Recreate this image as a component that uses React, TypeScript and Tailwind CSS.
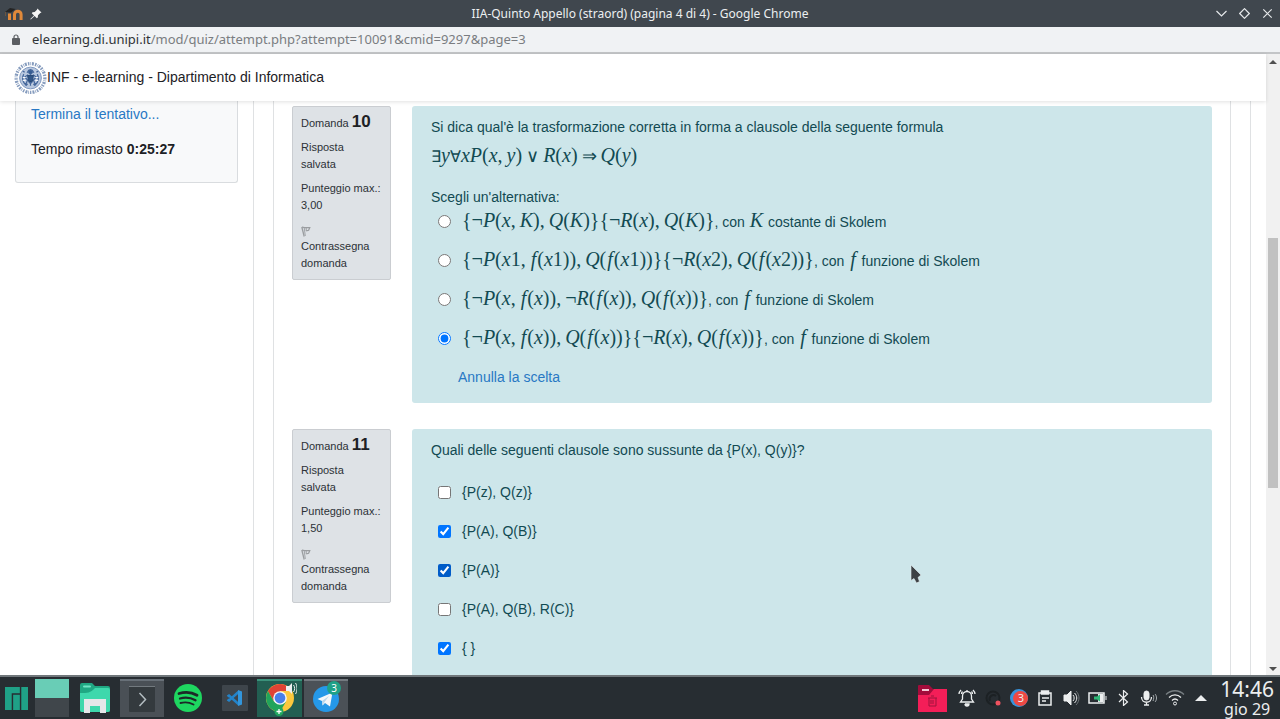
import React, { Fragment, useState } from "react";

const SANS = "font-['Liberation_Sans',Arial,sans-serif]";
const UI = "font-['Noto_Sans',sans-serif]";

/* Typesets a formula: letters in italics, brackets and digits upright, a thin space after commas. */
function Formula({ children }: { children: string }) {
  return (
    <span className="font-['Liberation_Serif',serif] text-[20px] leading-[22px] whitespace-nowrap">
      {Array.from(children).map((c, i) => {
        if (c === "f") return <i key={i} className="mx-px">f</i>;
        if (/[a-zA-Z]/.test(c)) return <i key={i}>{c}</i>;
        if (c === ",") return <span key={i} className="mr-1">,</span>;
        if (c === "∨" || c === "⇒") return <span key={i} className="mx-1 text-[18px]">{c}</span>;
        if (c === "∃" || c === "∀") return <span key={i} className="text-[16px]">{c}</span>;
        return <Fragment key={i}>{c}</Fragment>;
      })}
    </span>
  );
}

function TitleBar() {
  return (
    <header className={`${UI} grid h-[27px] shrink-0 grid-cols-[1fr_auto_1fr] items-center bg-[#40474e] text-[12px] text-[#eceff1]`}>
      <div className="flex items-center gap-[6px] pl-1">
        <svg width="20" height="16" viewBox="0 0 20 16" aria-hidden="true">
          <path d="M1 6 6 2 11.500 3 7 6.500Z" fill="#242424" />
          <path d="M1.500 6V10" stroke="#6b5540" strokeWidth="1" />
          <path d="M5.500 14V7.500M10.500 14V8.500a3.300 3.300 0 0 1 6.600 0V14" fill="none" stroke="#e0893a" strokeWidth="3" />
        </svg>
        <svg width="12" height="12" viewBox="0 0 12 12" aria-hidden="true">
          <path d="M7.400.5 11.500 4.600 10.300 5 8 7.300 7.800 9.500 6.800 10.200 4.600 8 .8 11.500.3 11 4 7.400 1.800 5.200 2.500 4.200 4.700 4 7 1.700Z" fill="#f5f5f5" />
        </svg>
      </div>
      <h1>IIA-Quinto Appello (straord) (pagina 4 di 4) - Google Chrome</h1>
      <div className="flex items-center justify-end gap-3 pr-[7px]">
        <button aria-label="Riduci">
          <svg width="11" height="11" viewBox="0 0 11 11" fill="none" stroke="#e6e9eb" strokeWidth="1.200"><path d="m.5 3 5 5 5-5" /></svg>
        </button>
        <button aria-label="Massimizza">
          <svg width="11" height="11" viewBox="0 0 11 11" fill="none" stroke="#e6e9eb" strokeWidth="1.200"><path d="M5.500.700 10.300 5.500 5.500 10.300.700 5.500Z" /></svg>
        </button>
        <button aria-label="Chiudi">
          <svg width="11" height="11" viewBox="0 0 11 11" fill="none" stroke="#e6e9eb" strokeWidth="1.200"><path d="m1.300 1.300 8.400 8.400m0-8.400-8.400 8.400" /></svg>
        </button>
      </div>
    </header>
  );
}

function AddressBar() {
  return (
    <div className={`${UI} flex h-[27px] shrink-0 items-center gap-3 border-b-2 border-[#c3c5c7] bg-[#f0f2f4] pl-3 text-[13px] text-[#7a7d81]`}>
      <svg width="8" height="11" viewBox="0 0 8 11" aria-hidden="true">
        <rect y="4" width="8" height="7" rx="1" fill="#5b5e62" />
        <path d="M2 4.500V3a2 2 0 0 1 4 0v1.500" fill="none" stroke="#5b5e62" strokeWidth="1.200" />
      </svg>
      <p><span className="text-[#2f3236]">elearning.di.unipi.it</span>/mod/quiz/attempt.php?attempt=10091&amp;cmid=9297&amp;page=3</p>
    </div>
  );
}

function Crest() {
  return (
    <svg width="33" height="36" viewBox="0 0 34 36" aria-hidden="true" fill="none" stroke="#45679b">
      <circle cx="17" cy="18" r="14.800" strokeWidth="3.400" strokeDasharray="1.500 1.100 .7 .9 2 1.200" opacity=".65" />
      <circle cx="17" cy="18" r="11.200" fill="#b9c8df" stroke="#7f98bf" strokeWidth="1" />
      <path d="M17 9v17M13.500 12.500c2-4 5-4 7 0M10 14c-2 4-1 8 2 11l2-5-3-3 3-2 3 3 3-3 3 2-3 3 2 5c3-3 4-7 2-11M12 26l5-4 5 4M11 12l-2-1m14 1 2-1" strokeWidth="1.300" />
      <path d="M14 15.500h6l-1 6h-4Z" fill="#315687" stroke="#274876" />
      <circle cx="17" cy="12" r="2" fill="#345b91" />
      <path d="M9 17.500h3m10 0h3M9 20.500h3m10 0h3M14 24h2m2 0h2" stroke="#fff" strokeWidth="1" />
    </svg>
  );
}

function FlagIcon() {
  return (
    <svg className="block" width="10" height="11" viewBox="0 0 10 11" fill="none" stroke="#9a9da0" aria-hidden="true">
      <path d="M.8 1 3.200 10.500" strokeWidth="1.300" />
      <path d="M3.200 1.500 4.300 10" strokeWidth=".9" />
      <path d="M1 1.200 3.500 1.600 8.800 1.500 7.600 4.300 5.200 4.800" strokeWidth="1.200" />
      <path d="M5.200 2v3" strokeWidth="1" />
    </svg>
  );
}

function Question({ number, marks, children }: { number: number; marks: string; children: React.ReactNode }) {
  return (
    <article className="flex items-start gap-[21px]">
      <aside className="flex w-[99px] shrink-0 flex-col gap-[7px] rounded-[2px] border border-[#cacdd1] bg-[#dee2e6] px-2 pt-[6px] pb-[7px] text-[11px] leading-[17px] text-[#2c3136]">
        <h3>Domanda <b className="text-[17px] text-[#1d2125]">{number}</b></h3>
        <p>Risposta<br />salvata</p>
        <p className="whitespace-nowrap">Punteggio max.:<br />{marks}</p>
        <button className="pt-[5px] text-left">
          <FlagIcon />
          <span className="block pt-px">Contrassegna domanda</span>
        </button>
      </aside>
      <section className="min-w-0 flex-1 rounded-[3px] bg-[#cde6ea] px-[19px] pt-[10px] pb-[15px] text-[14px] leading-[22px] text-[#124a52]">
        {children}
      </section>
    </article>
  );
}

const ALTERNATIVES = [
  { f: "{¬P(x,K),Q(K)}{¬R(x),Q(K)}", symbol: "K", rest: "costante di Skolem" },
  { f: "{¬P(x1,f(x1)),Q(f(x1))}{¬R(x2),Q(f(x2))}", symbol: "f", rest: "funzione di Skolem" },
  { f: "{¬P(x,f(x)),¬R(f(x)),Q(f(x))}", symbol: "f", rest: "funzione di Skolem" },
  { f: "{¬P(x,f(x)),Q(f(x))}{¬R(x),Q(f(x))}", symbol: "f", rest: "funzione di Skolem" },
];

const CLAUSES = ["{P(z), Q(z)}", "{P(A), Q(B)}", "{P(A)}", "{P(A), Q(B), R(C)}", "{ }"];

function QuizPage() {
  const [choice, setChoice] = useState(3);
  const [checked, setChecked] = useState([false, true, true, false, true]);
  return (
    <main className="flex min-h-0 flex-1 overflow-hidden">
      <div className="flex w-[254px] shrink-0 border-r border-[#dfe1e3] pr-[15px] pl-[15px]">
        <aside className="h-[82px] flex-1 rounded-b-[3px] border border-t-0 border-[#d9dcdf] bg-[#f8f9fa] px-[15px] text-[14px] leading-[22px] text-[#1d2125]">
          <a href="#fine" className="mt-[2px] block text-[#2878c4]">Termina il tentativo...</a>
          <p className="mt-[13px]">Tempo rimasto <b>0:25:27</b></p>
        </aside>
      </div>
      <div className="ml-[19px] flex min-w-0 flex-1 flex-col gap-[26px] border-x border-[#dfe1e3] px-[18px] pt-[5px]">
        <Question number={10} marks="3,00">
          <p>Si dica qual'è la trasformazione corretta in forma a clausole della seguente formula</p>
          <p className="mt-[6px]"><Formula>∃y∀xP(x,y)∨R(x)⇒Q(y)</Formula></p>
          <fieldset className="mt-[18px]">
            <legend>Scegli un'alternativa:</legend>
            <div className="mt-[2px] flex flex-col gap-[17px] pl-[7px]">
              {ALTERNATIVES.map((a, i) => (
                <label key={i} className="flex h-[22px] items-center gap-[11px]">
                  <input type="radio" name="q10" className="size-[13px]" checked={choice === i} onChange={() => setChoice(i)} />
                  <span className="whitespace-nowrap">
                    <Formula>{a.f}</Formula>, con <span className="mx-px"><Formula>{a.symbol}</Formula></span> {a.rest}
                  </span>
                </label>
              ))}
            </div>
          </fieldset>
          <button className="mt-[17px] ml-[27px] block text-[#2878c4]" onClick={() => setChoice(-1)}>Annulla la scelta</button>
        </Question>
        <Question number={11} marks="1,50">
          <p>Quali delle seguenti clausole sono sussunte da {"{P(x), Q(y)}"}?</p>
          <div className="mt-[20px] flex flex-col gap-[17px] pb-10 pl-[7px]">
            {CLAUSES.map((c, i) => (
              <label key={c} className="flex h-[22px] items-center gap-[11px]">
                <input
                  type="checkbox"
                  className={i === 2 ? "size-[13px] accent-[#005cc8]" : "size-[13px]"}
                  checked={checked[i]}
                  onChange={() => setChecked(checked.map((v, j) => (j === i ? !v : v)))}
                />
                {c}
              </label>
            ))}
          </div>
        </Question>
      </div>
      <div className="ml-[19px] w-4 shrink-0 border-l border-[#dfe1e3]" />
    </main>
  );
}

function Scrollbar() {
  return (
    <div className="flex w-[14px] shrink-0 flex-col bg-[#f1f1f1]">
      <svg width="14" height="17" viewBox="0 0 14 17" aria-hidden="true"><path d="M3 10h8L7 6Z" fill="#505050" /></svg>
      <div className="flex-[167]" />
      <div className="mr-[2px] ml-[2px] flex-[250] bg-[#c1c1c1]" />
      <div className="flex-[170]" />
      <svg width="14" height="17" viewBox="0 0 14 17" aria-hidden="true"><path d="M3 9h8l-4 4Z" fill="#505050" /></svg>
    </div>
  );
}

function Launchers() {
  return (
    <nav className="flex h-full items-center">
      <button aria-label="Menu" className="flex w-[35px] pl-[5px]">
        <svg width="23" height="23" viewBox="0 0 24 24"><path d="M0 0h15.500v6.500H7V24H0ZM8.500 8h7v16h-7ZM17 0h7v24h-7Z" fill="#1fa187" /></svg>
      </button>
      <button aria-label="Desktop virtuali" className="flex h-[38px] w-[34px] flex-col">
        <span className="w-full flex-1 bg-[#69cdb6]" />
        <span className="w-full flex-1 bg-[#40464b]" />
      </button>
      <button aria-label="File" className="flex w-[51px] justify-center">
        <svg width="32" height="32" viewBox="0 0 32 32">
          <path d="M1 3a2 2 0 0 1 2-2h10l3 3h13a2 2 0 0 1 2 2v22a2 2 0 0 1-2 2H3a2 2 0 0 1-2-2Z" fill="#20a883" />
          <path d="M1 11c8 0 10 0 15-5h13a2 2 0 0 1 2 2v20a2 2 0 0 1-2 2H3a2 2 0 0 1-2-2Z" fill="#3ed8ac" />
          <rect x="4" y="3.500" width="8" height="2" rx="1" fill="#71e5c5" />
          <path d="M5 17h22v14h-6v-7H11v7H5Z" fill="#e5e7e9" />
        </svg>
      </button>
      <button aria-label="Terminale" className="flex h-[38px] w-[44px] items-center justify-center border-t-2 border-[#687078] bg-[#4a5056]">
        <svg width="26" height="26" viewBox="0 0 26 26"><rect width="26" height="26" rx="1" fill="#343a3e" /><path d="M0 .5h26" stroke="#737a7f" /><path d="m10.500 7 6 6.500-6 6.500" fill="none" stroke="#b4bdc1" strokeWidth="1.500" /></svg>
      </button>
      <button aria-label="Spotify" className="flex w-[48px] justify-center">
        <svg width="28" height="28" viewBox="0 0 28 28">
          <circle cx="14" cy="14" r="14" fill="#1ed760" />
          <path d="M5 9.500c6-1.800 13-1.200 18 1.700" fill="none" stroke="#1d2a28" strokeWidth="2.800" strokeLinecap="round" />
          <path d="M6 14.500c5-1.500 11-.8 15.500 1.700" fill="none" stroke="#1d2a28" strokeWidth="2.300" strokeLinecap="round" />
          <path d="M6.500 19c4.500-1.200 9-.7 13 1.500" fill="none" stroke="#1d2a28" strokeWidth="1.900" strokeLinecap="round" />
        </svg>
      </button>
      <button aria-label="Visual Studio Code" className="flex w-[45px] justify-center">
        <svg width="26" height="26" viewBox="0 0 26 26">
          <rect width="26" height="26" rx="1" fill="#3e454b" />
          <path d="M17 6.500 7 15.500l-1.500-1M17 19.500 7 10.500l-1.500 1" fill="none" stroke="#2383c9" strokeWidth="2.500" />
          <path d="m16 5 4 1.500v13L16 21Z" fill="#3296dc" />
        </svg>
      </button>
      <button aria-label="Google Chrome" className="flex h-[38px] w-[45px] items-center justify-center border-t-2 border-[#3b927b] bg-[#225f52]">
        <svg width="34" height="34" viewBox="0 0 34 34">
          <circle cx="17" cy="16" r="14" fill="#fbc83d" />
          <path d="M17 16 4.900 9A14 14 0 0 1 29.100 9H17Z" fill="#df4334" />
          <path d="M4.900 9 11 19.500 17 9Z" fill="#df4334" />
          <path d="M4.900 9 11 19.500 23 19.500 17 30A14 14 0 0 1 4.900 9Z" fill="#21a45b" />
          <circle cx="17" cy="16" r="6.800" fill="#f5f7f8" /><circle cx="17" cy="16" r="5.400" fill="#477fe9" />
          <path d="M23 4h3l3-3v11l-3-3h-3Z" fill="#eef0f0" /><path d="M30.500 3c1.500 2 1.500 5 0 7M32.500 1c2 3 2 8 0 11" stroke="#eef0f0" fill="none" />
          <circle cx="16" cy="29.500" r="4.500" fill="#20a85d" /><path d="M16 27v5m-2.500-2.500h5" stroke="#fff" strokeWidth="1.300" />
        </svg>
      </button>
      <button aria-label="Telegram" className="relative ml-[2px] flex h-[38px] w-[44px] items-center justify-center border-t-2 border-[#747a80] bg-[#4b5157]">
        <svg width="26" height="26" viewBox="0 0 26 26"><circle cx="13" cy="13" r="13" fill="#2598e8" /><path d="m4.500 13 15-6.500-2.500 14-5-3.500-2.500 2.500-.5-4.500Z" fill="#f4f7f9" /><path d="m9 15 7-5-4.500 6-2 3.500Z" fill="#b9d7ec" /></svg>
        <span className="absolute top-0 right-[7px] flex size-[14px] items-center justify-center rounded-full bg-[#1fa187] text-[10px] text-white">3</span>
      </button>
    </nav>
  );
}

function Cell({ children }: { children: React.ReactNode }) {
  return <li className="flex w-[26px] justify-center">{children}</li>;
}

function Tray() {
  return (
    <div className="flex h-full items-center pr-[6px] text-[#eceeef]">
      <svg className="mr-[7px]" width="29" height="27" viewBox="0 0 29 27" aria-hidden="true"><path d="M0 1a1 1 0 0 1 1-1h10l4 4h14v22H0Z" fill="#a30c3b" /><path d="M0 10h11l5-6h13v23H0Z" fill="#f41e58" /><path d="M4 5h7" stroke="#f5c7d4" strokeWidth="2" /><path d="M10 13h9m-8 0v8h7v-8m-5-2h3m-3 4v4m2-4v4" fill="none" stroke="#9f123c" /></svg>
      <ul className="flex items-center">
        <Cell><svg width="18" height="18" viewBox="0 0 18 18" fill="none" stroke="currentColor" strokeWidth="1.300" aria-hidden="true"><path d="M2.500 13h13L13.500 10V7a4.500 4.500 0 0 0-9 0v3ZM9 1v1.500M1 5c0-2 1-3 2-4m14 4c0-2-1-3-2-4M3.500 5c0-1 .5-2 1-2.500M14.500 5c0-1-.5-2-1-2.500" /><path d="M7 15h4a2 2 0 0 1-4 0" fill="currentColor" /></svg></Cell>
        <Cell><svg width="17" height="18" viewBox="0 0 17 18" fill="none" aria-hidden="true"><circle cx="8" cy="9" r="6.500" stroke="#1c2124" strokeWidth="2" /><path d="M5 12a4 4 0 0 1 6-5" stroke="#1c2124" strokeWidth="2" /><circle cx="13" cy="14" r="2.500" fill="#ef5360" /></svg></Cell>
        <Cell><span className="relative flex size-[18px] items-center justify-center rounded-full bg-[#3793dc]"><span className="absolute top-[2px] left-[3px] flex size-[15px] items-center justify-center rounded-full bg-[#ed4843] text-[11px]">3</span></span></Cell>
        <Cell><svg width="14" height="16" viewBox="0 0 14 16" fill="none" stroke="currentColor" strokeWidth="1.500" aria-hidden="true"><path d="M1 3h12v12H1Z" /><path d="M3.500 1h7v3h-7Z" fill="currentColor" /><path d="M4 8h7M4 11h4" /></svg></Cell>
        <Cell><svg width="17" height="16" viewBox="0 0 17 16" fill="none" stroke="currentColor" aria-hidden="true"><path d="M1 5h3l4-4v14l-4-4H1Z" fill="currentColor" /><path d="M10 5c1.500 1.500 1.500 4.500 0 6M11.500 3c3 3 3 7 0 10" /><path d="M13 1c4 4 4 10 0 14" stroke="#6e7478" /></svg></Cell>
        <Cell><svg width="19" height="12" viewBox="0 0 19 12" fill="none" aria-hidden="true"><path d="M1 1h15v10H1Z" stroke="#eceeef" strokeWidth="1.500" /><path d="M18 4v4" stroke="#eceeef" /><path d="M10 2h5.300v8H10Z" fill="#eceeef" /><path d="M12 2.500v7L9 7.500H6v-3h3Z" fill="#2fba78" /></svg></Cell>
        <Cell><svg width="11" height="16" viewBox="0 0 11 16" fill="none" stroke="currentColor" aria-hidden="true"><path d="m1 4 8.500 8L5.500 15.500V.5l4 3.500L1 12" strokeWidth="1.200" /></svg></Cell>
        <Cell><svg width="18" height="16" viewBox="0 0 18 16" fill="none" stroke="currentColor" aria-hidden="true"><rect x="4" y="1" width="5" height="9" rx="2.500" fill="currentColor" /><path d="M1.500 7c0 7 10 7 10 0M6.500 12v3M4 15h5" strokeWidth="1.300" /><path d="M13 5c1 1 1 4 0 6m2-7c2 2 2 6 0 8" stroke="#a5abae" /></svg></Cell>
        <Cell><svg width="20" height="16" viewBox="0 0 20 16" fill="none" stroke="currentColor" aria-hidden="true"><path d="M1 4.500c5-5 13-5 18 0" stroke="#777e82" strokeWidth="1.300" /><path d="M4 7.500c3.500-3.500 8.500-3.500 12 0M7 10.500c2-2 4-2 6 0" strokeWidth="1.200" /><circle cx="10" cy="13.500" r="1.500" /></svg></Cell>
        <Cell><svg width="12" height="6" viewBox="0 0 12 6" aria-hidden="true"><path d="M0 6h12L6 0Z" fill="currentColor" /></svg></Cell>
      </ul>
      <time className="ml-[6px] flex flex-col items-center">
        <span className="text-[21px] leading-[22px]">14:46</span>
        <span className="text-[16px] leading-[18px]">gio 29</span>
      </time>
    </div>
  );
}

export default function App() {
  return (
    <div className={`${SANS} relative flex h-screen flex-col overflow-hidden bg-white`}>
      <TitleBar />
      <AddressBar />
      <div className="flex min-h-0 flex-1">
        <div className="flex min-w-0 flex-1 flex-col">
          <header className="z-10 flex h-[47px] shrink-0 items-center bg-white pl-[14px] text-[14px] text-[#1d2125] shadow-[0_1px_4px_rgba(0,0,0,0.12)]">
            <Crest />
            <a href="#home">INF - e-learning - Dipartimento di Informatica</a>
          </header>
          <QuizPage />
        </div>
        <Scrollbar />
      </div>
      <footer className={`${UI} flex h-[44px] shrink-0 items-center justify-between border-t-2 border-[#70777b] bg-[#272d32]`}>
        <Launchers />
        <Tray />
      </footer>
      <svg className="pointer-events-none absolute top-[564px] left-[910px]" width="14" height="20" viewBox="0 0 14 20" aria-hidden="true">
        <path d="M1 1v15.500l3-2L6.500 19l3-1.500L8 13.500l3-2.500Z" fill="#3d4144" stroke="#e4eff0" strokeWidth=".6" />
      </svg>
    </div>
  );
}
